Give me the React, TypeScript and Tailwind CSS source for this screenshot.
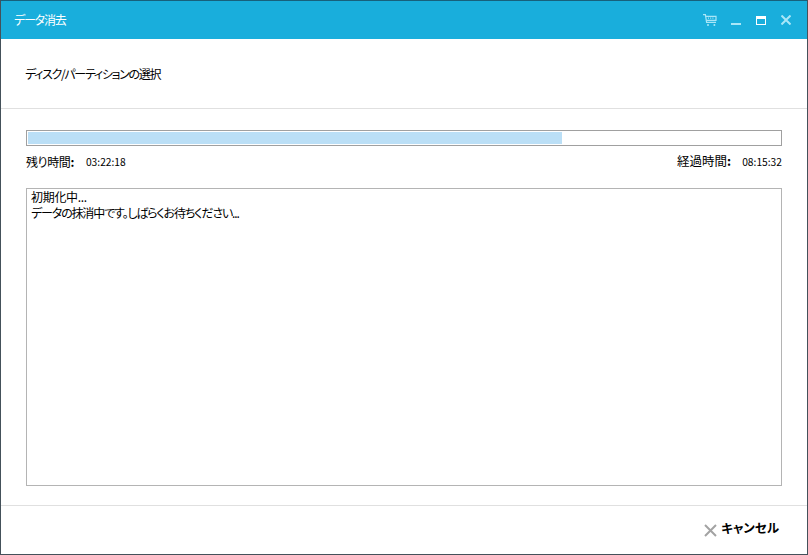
const FONT = "font-['Noto_Sans_CJK_JP','Liberation_Sans',sans-serif] [font-feature-settings:'palt']";

function CartIcon() {
  return (
    <svg width="14" height="13" viewBox="0 0 14 13" fill="none" stroke="#a9e6f7" strokeWidth="1.2" aria-hidden="true">
      <path d="M0 .6 H2.4 L3.6 8.4 H13" />
      <path d="M2.8 2.4 H13 V6.4 H3.4" />
      <path d="M5 4.2 H6 M7.2 4.2 H8.2 M9.4 4.2 H10.4" />
      <circle cx="5" cy="11" r="1" fill="#a9e6f7" stroke="none" />
      <circle cx="11.4" cy="11" r="1" fill="#a9e6f7" stroke="none" />
    </svg>
  );
}

export default function App() {
  return (
    <div className={`${FONT} w-[808px] h-[555px] flex flex-col bg-white border border-t-0 border-[#44515a] text-[12px] text-black`}>
      {/* Title bar */}
      <div className="h-[39px] shrink-0 flex items-center bg-[#19aedc] border-t border-[#17607c] pl-[13px] pr-[16px]">
        <span className="text-[12px] tracking-[-1.2px] text-white">データ消去</span>
        <div className="ml-auto flex items-center">
          <CartIcon />
          <div className="ml-[14px] mt-[8px] w-[10px] h-[2px] bg-[#a9e6f7]" />
          <div className="ml-[15px] w-[10px] h-[9px] border border-t-[3px] border-white" />
          <svg className="ml-[15px]" width="10" height="10" viewBox="0 0 10 10" stroke="#a9e6f7" strokeWidth="2" aria-hidden="true">
            <path d="M.5 .5 L9.5 9.5 M9.5 .5 L.5 9.5" />
          </svg>
        </div>
      </div>

      {/* Heading */}
      <div className="h-[70px] shrink-0 flex items-center pl-[24px] border-b border-[#e0e0e0]">
        <span className="tracking-[-1.3px]">ディスク/パーティションの選択</span>
      </div>

      {/* Body */}
      <div className="flex-1 flex flex-col pt-[21px] pl-[25px] pr-[25px] pb-[19px]">
        <div className="h-[16px] border border-[#a0a0a0] p-px shrink-0">
          <div className="h-full w-[71%] bg-[#bbdff6]" />
        </div>
        <div className="h-[17px] mt-[7px] shrink-0 flex items-center justify-between">
          <div className="flex items-center">
            <span className="tracking-[-0.4px]">残り時間<b>:</b></span>
            <span className="ml-[12px] text-[10.25px]">03:22:18</span>
          </div>
          <div className="flex items-center">
            <span className="text-[12.5px]">経過時間<b>:</b></span>
            <span className="ml-[11px] text-[10.25px]">08:15:32</span>
          </div>
        </div>
        <div className="flex-1 mt-[18px] border border-[#b4b4b4] pl-[4px] leading-[16px]">
          <div className="tracking-[-0.3px]">初期化中...</div>
          <div className="tracking-[-1.15px]">データの抹消中です。しばらくお待ちください...</div>
        </div>
      </div>

      {/* Footer */}
      <div className="h-[49px] shrink-0 flex items-center justify-end border-t border-[#e0e0e0] pr-[28px]">
        <button type="button" className="flex items-center">
          <svg width="13" height="13" viewBox="0 0 13 13" stroke="#a3a3a3" strokeWidth="2" aria-hidden="true">
            <path d="M1 1 L12 12 M12 1 L1 12" />
          </svg>
          <span className="ml-[4px] mb-[3px] text-[12.5px] font-bold">キャンセル</span>
        </button>
      </div>
    </div>
  );
}
